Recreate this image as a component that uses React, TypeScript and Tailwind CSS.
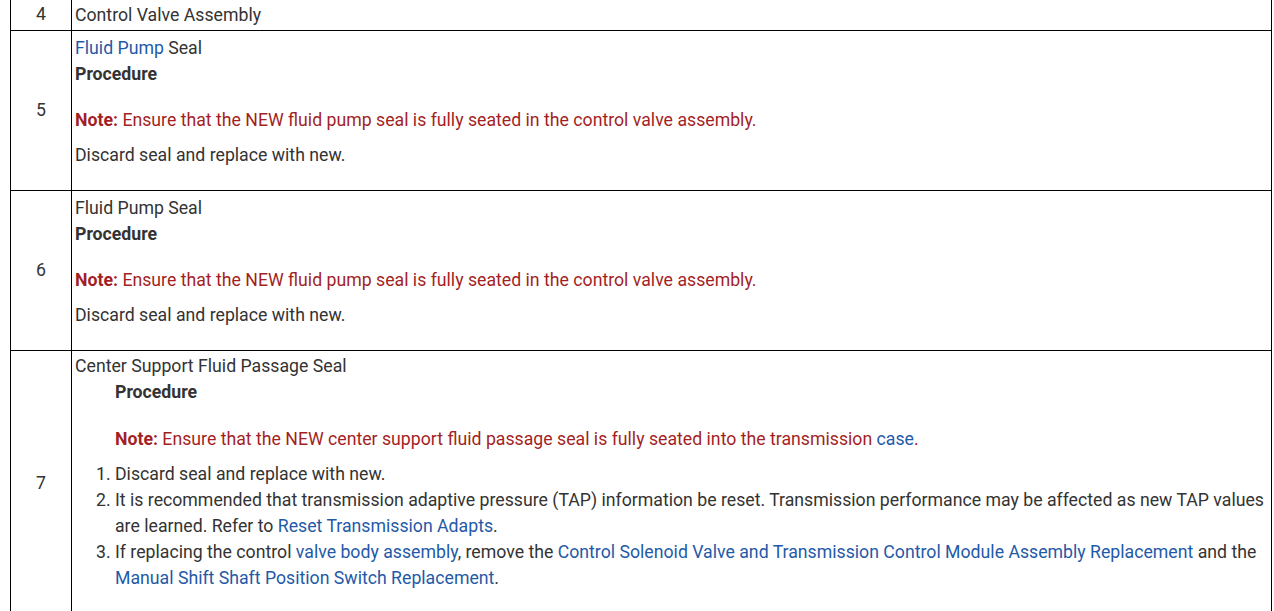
import React from 'react';

const link = 'text-[#1f5aa8]';
const note = 'text-[#a31f24]';

function Note({ children }: { children: React.ReactNode }) {
  return (
    <p className={`${note} mt-[20px] leading-[26px]`}>
      <b className="font-bold">Note:</b> {children}
    </p>
  );
}

function SealRow({ num, linked }: { num: string; linked: boolean }) {
  return (
    <tr>
      <td className="border border-black text-center align-middle">{num}</td>
      <td className="border border-black px-[3px] pt-[4px] pb-[22px] align-top">
        <div className="leading-[26px]">
          {linked ? <span className={link}>Fluid Pump</span> : 'Fluid Pump'} Seal
        </div>
        <div className="leading-[26px] font-bold">Procedure</div>
        <Note>Ensure that the NEW fluid pump seal is fully seated in the control valve assembly.</Note>
        <p className="mt-[9px] leading-[26px]">Discard seal and replace with new.</p>
      </td>
    </tr>
  );
}

export default function App() {
  return (
    <div className="min-h-screen bg-white overflow-hidden text-[17.7px] text-[#333333] font-['Roboto','Liberation_Sans',sans-serif]">
      <table className="ml-[10px] w-[1262px] border-collapse table-fixed -mt-[3px]">
        <colgroup>
          <col className="w-[61px]" />
          <col />
        </colgroup>
        <tbody>
          <tr>
            <td className="border border-black text-center align-middle">4</td>
            <td className="border border-black px-[3px] pt-[4px] pb-[2px] leading-[26px]">Control Valve Assembly</td>
          </tr>
          <SealRow num="5" linked />
          <SealRow num="6" linked={false} />
          <tr>
            <td className="border border-black text-center align-middle">7</td>
            <td className="border border-black px-[3px] pt-[2px] pb-[25px] align-top">
              <div className="leading-[26px]">Center Support Fluid Passage Seal</div>
              <div className="pl-[40px]">
                <div className="leading-[26px] font-bold">Procedure</div>
                <p className={`${note} mt-[21px] leading-[26px]`}>
                  <b className="font-bold">Note:</b> Ensure that the NEW center support fluid passage seal is fully seated into the transmission <span className={link}>case</span>.
                </p>
              </div>
              <ol className="list-decimal pl-[40px] mt-[9px] leading-[26px]">
                <li>Discard seal and replace with new.</li>
                <li>
                  It is recommended that transmission adaptive pressure (TAP) information be reset. Transmission performance may be affected as new TAP values are learned. Refer to <span className={link}>Reset Transmission Adapts</span>.
                </li>
                <li>
                  If replacing the control <span className={link}>valve body assembly</span>, remove the <span className={link}>Control Solenoid Valve and Transmission Control Module Assembly Replacement</span> and the <span className={link}>Manual Shift Shaft Position Switch Replacement</span>.
                </li>
              </ol>
            </td>
          </tr>
        </tbody>
      </table>
    </div>
  );
}
